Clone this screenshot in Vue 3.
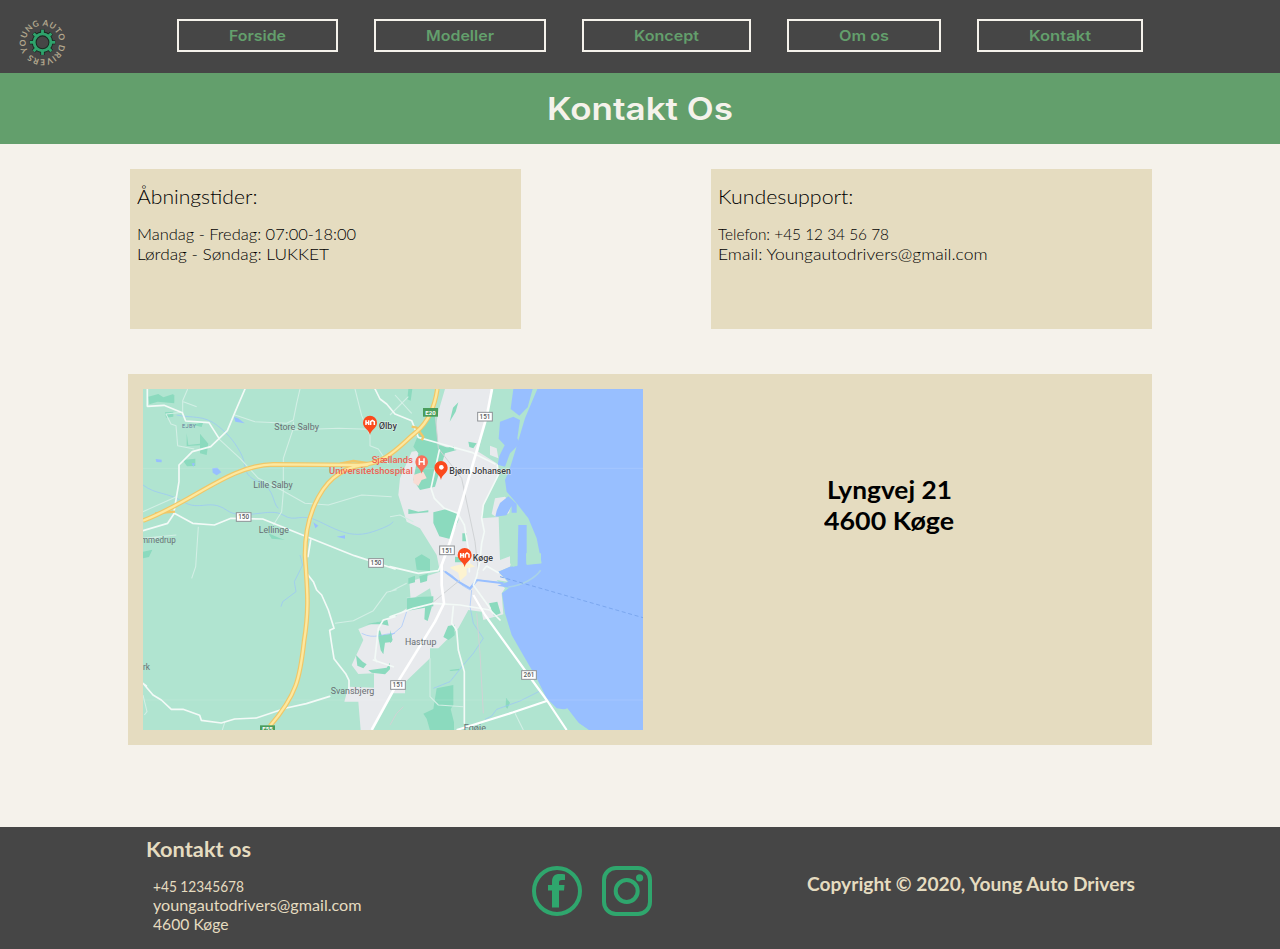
<script setup>
const links = [
  { label: 'Forside', measure: 57 },
  { label: 'Modeller', measure: 68 },
  { label: 'Koncept', measure: 65 },
  { label: 'Om os', measure: 50 },
  { label: 'Kontakt', measure: 62 },
]

const cards = [
  {
    title: 'Åbningstider:',
    measure: 120.5,
    lines: [
      { text: 'Mandag - Fredag: 07:00-18:00', measure: 219 },
      { text: 'Lørdag - Søndag: LUKKET', measure: 192 },
    ],
  },
  {
    title: 'Kundesupport:',
    measure: 135.5,
    lines: [
      { text: 'Telefon: +45 12 34 56 78', measure: 171 },
      { text: 'Email: Youngautodrivers@gmail.com', measure: 269.5 },
    ],
  },
]

const contact = [
  { text: '+45 12345678', measure: 91 },
  { text: 'youngautodrivers@gmail.com', measure: 208.5 },
  { text: '4600 Køge', measure: 75.5 },
]

const teeth = [0, 45, 90, 135, 180, 225, 270, 315]

const places = [
  { text: 'Store Salby', x: 403, y: 136, w: 134 },
  { text: 'Lille Salby', x: 340, y: 309, w: 118 },
  { text: 'Lellinge', x: 356, y: 445, w: 91 },
  { text: 'mmedrup', x: 3, y: 475, w: 104 },
  { text: 'Svansbjerg', x: 572, y: 927, w: 131 },
  { text: 'Hastrup', x: 795, y: 780, w: 94 },
  { text: 'Egøje', x: 971, y: 1039, w: 67 },
  { text: 'rk', x: 9, y: 855, w: 21 },
]

const shields = [
  { text: '150', x: 311, y: 396 },
  { text: '150', x: 708, y: 534 },
  { text: '151', x: 1035, y: 95 },
  { text: '151', x: 921, y: 496 },
  { text: '151', x: 774, y: 900 },
  { text: '261', x: 1167, y: 870 },
]

// Widens a line of text to its measure by stretching the letterforms.
const vFit = {
  mounted(el, { value }) {
    const natural = el.getBoundingClientRect().width
    el.style.width = `${value}px`
    el.style.transform = `scaleX(${value / natural})`
  },
}
</script>

<template>
  <div class="page">
    <header class="top">
      <svg class="logo" viewBox="0 0 45 45">
        <defs>
          <path id="ring" d="M8.2 31.4A16.8 16.8 0 1 1 36.8 13.6A16.8 16.8 0 1 1 8.2 31.4" />
        </defs>
        <text class="ring-text" textLength="101.5">
          <textPath href="#ring" textLength="101.5">YOUNG AUTO DRIVERS</textPath>
        </text>
        <g stroke="#16251d" stroke-width="4.2">
          <path v-for="a in teeth" :key="a" d="M22.5 13.2V9.6" :transform="`rotate(${a} 22.5 22.3)`" />
        </g>
        <circle cx="22.5" cy="22.3" r="8.3" fill="none" stroke="#1b2a22" stroke-width="4.8" />
        <g stroke="#2fa36c" stroke-width="2.8">
          <path v-for="a in teeth" :key="a" d="M22.5 13.8V9.7" :transform="`rotate(${a} 22.5 22.3)`" />
        </g>
        <circle cx="22.5" cy="22.3" r="8.4" fill="none" stroke="#2fa36c" stroke-width="2.9" />
      </svg>
      <nav class="nav">
        <a v-for="l in links" :key="l.label" class="nav-link"><span v-fit="l.measure" class="fit">{{ l.label }}</span></a>
      </nav>
    </header>

    <h1 class="banner"><span v-fit="186" class="fit">Kontakt Os</span></h1>

    <main class="content">
      <section class="cards">
        <article v-for="c in cards" :key="c.title" class="card">
          <h2 class="card-title"><span v-fit="c.measure" class="fit">{{ c.title }}</span></h2>
          <p v-for="l in c.lines" :key="l.text" class="card-line"><span v-fit="l.measure" class="fit">{{ l.text }}</span></p>
        </article>
      </section>

      <section class="location">
        <svg class="map" viewBox="9 12 1500 1023">
          <rect x="9" y="12" width="1500" height="1023" fill="#b0e4d0" />
          <!-- built-up area -->
          <path fill="#e8eaed" d="M915 12H1056L1040 80L1015 200L1072 236L1075 270L1030 360L1023 400L1076 396L1080 525L1120 510L1110 545L1075 560L1103 590L1070 585L1095 610L1085 625L1090 688L1030 705L1025 680L985 675L955 730L895 790L870 790V820L795 892V925L755 925L695 1035H662L655 950H613L625 905L702 908V865L655 867L635 840L670 765L655 732L700 715L765 695L800 670V638L875 635L870 610L812 645L808 590L900 560L890 510L840 430L800 410L775 330L780 280L815 200L915 185L880 170L895 80Z" />
          <path fill="#e8eaed" d="M1050 182l20 8 5 30-25-10zM1065 340l30-5 20 20-8 30-40 10-12-8z" />
          <!-- parks and woods -->
          <g fill="#8bdabe">
            <path d="M25 35l30-8 15 10 30-10 3 28-50-5-25 8zM68 40l35-10v20zM75 82l25-2v15l-22 3zM140 145l5 35 35-4v-30l25 30-5 34-20-5v-24l-40 2zM128 225l38-4v22l-25 1zM385 445l35 15 15 4-40-3zM9 500l28-6-10 22-18 4zM160 120l30-10-5 16z" />
            <path d="M805 12h12l-5 35-10-4zM955 52l-8 28-18 30 10-42zM855 100l30-10 10 90 55 15-35 10-30 100-45 10-20-30 15-80-15-20zM985 170l25 5-10 15-12-4zM880 382l40-10 35 15v20l-25 55-32-8-18-40zM805 372l30 8 30-4v6l-60 5zM967 445h14v24h-14zM920 188l22-4v12zM945 515l20 2v15h-20z" />
            <path d="M825 520l20-12 25 15v35l-40-4zM805 580l20-8v20l-20 5zM838 574l25-8-2 22-20 6zM800 640l35-4 45-2v30l-80 14zM855 668l22-8-14 48-10-5zM924 723l20-4v32l-18 14-16-9zM1047 655l25-5 10 35-20 8zM890 910l50-10v60l-8 12 10 40v24h-72l-10-35-10-15 30-14zM1098 938l12 15-8 18-5-6zM928 855l30-4v5l-26 2zM750 735l8 30-8 10z" />
            <path d="M680 718l62-14 4 18-20-4zM712 740l8-4 5 15 30-5v25l-20 2-5 35-8-12zM648 810l20 20 12 8-10 12-18-8zM685 856l55-8 10-15v20l-15 15-40-5z" />
          </g>
          <!-- bay and lakes -->
          <path fill="#98bfff" d="M1192 12L1155 100L1125 200L1108 255L1095 285L1100 320L1130 355L1165 400L1190 460L1203 525L1205 535L1160 540V420H1135L1132 543L1110 545L1075 560L1105 590L1072 602L1108 608L1086 625L1095 685L1115 750L1155 820L1190 880L1220 940L1250 970L1285 975L1310 1010L1345 1035H1509V12Z" />
          <path fill="#98bfff" d="M1120 12h58l-15 55-25 25-26-20zM1080 110l40-15 20 10-8 55 8 15-30 30-15 40-22-6 5-26 16-32-18-20zM1080 354l25-20 25 22v27h-15v-20l-16 28-33 4 4-18zM217 250l15-2 12 14-14 9-12-8zM282 96l12 4 20 15-28-5zM47 222l18 2v8l-16-1zM520 412l15 10-9 8zM590 455l25-4v10zM155 235h10l-5 10z" />
          <path fill="#b0e4d0" d="M1110 505h22v35l-12 5-10-10zM1158 505h45v30l-44 2z" />
          <path fill="#b0e4d0" d="M1210 958l50 20 22-8 35 45 30 20h-70z" />
          <g fill="none" stroke="#98bfff" stroke-width="3">
            <path d="M110 90c50 10 80 0 120 30s60 60 75 90 0 60 50 80 40 60 60 80M9 300c40 30 70 20 120 50s80-10 130 25 130-10 170 15 50-10 110 20 100 50 160 30 60-30 60-30M480 510l8 30-25 50 5 30-40 30-5 15M665 745c40 20 60 0 100 0M750 755l35-30 15-45M905 555l30 15 30 30 25 15 25-30 80 10M995 615l-5 50 10 50 30 45-30 45-30 35-40 50-50 20M1200 918l-60 30-70 25-15 20-20 10" opacity=".6" />
            <path d="M915 560l40 30 35 20 20-25 80 10" stroke-width="6" />
            <path d="M1105 606c40-5 80-25 97-50" stroke="#a9d2e8" stroke-width="5" />
          </g>
          <path d="M1080 575L1509 698" fill="none" stroke="#7ba7ef" stroke-width="3" stroke-dasharray="12 8" />
          <path d="M9 250H1509M9 945H1509" stroke="#fff" stroke-width="1.5" opacity=".25" />
          <path d="M1010 685l10 120 10 180M750 1020l20-35 20-20M885 80l10 110 70 90 40 190 10 90M875 655l85-70" fill="none" stroke="#d0d3d5" stroke-width="3" />
          <!-- local roads -->
          <g fill="none" stroke="#d3efe5" stroke-width="3.2" stroke-linejoin="round">
            <path d="M143 12l-15 35v35l-50 5 15 30 15 5 5 60 50 10M130 50l40 15M235 160l65 60 55 60 60 30 80 45 70 5 100-30 90 5M285 90l60 20 95 5 20-10 10-50 10-43M460 110v20l-30 90v100l-5 60-25 40M455 135l140-5 90 3M645 12l20 80 25 60 0 30 25 10 30 45M175 425l-8 120-12 35M9 380l100-45M585 715l55-8 60-30 40-55 30-8M9 930l12 50-8 10M255 1010l-8 25M750 90l30-30 25-25M750 395l30-5 40 20M870 820v115l25 25 75 5M1125 985l25 50M750 620l50-25M765 30l50 55M25 465l35-10M9 460l100-10" />
          </g>
          <g fill="none" stroke="#f3faf7" stroke-width="5" stroke-linecap="round" stroke-linejoin="round">
            <path d="M22 12v52l50-3 55 22 10 25 70 5 30 47M315 12l-28 65-25 60-50 48-55 15-40 40v50l-15 90M103 385l-20 30-74 22" />
            <path d="M103 385l55 30 65 5 50-20 95 2 125 50 150 60 122 40M512 465l-8 50" />
            <path d="M705 12l15 30 20 15 25 30 50 20 20 50 70 20 90 25 70 35" />
            <path d="M500 565l20 25 10 25 15 15 20 45 17 55-13 6 5 35 8 50 35 45 10 20v30M9 895l30 35 25 15 30 28h35l50 18 5 15 60 8 40-12 65-3 90-30 60-13 70-22M9 895l10 8" />
            <path d="M1072 240l3 30-45 90-5 40 8 40-8 35-5 50-10 50-10 25 50 70M898 195l-25 115 10 30 30 30 40 15 20 35 15 90 0 50" />
            <path d="M750 545l85 20 60-8 25-50M750 695l70-25 60-15 80 5 90 15 30 30M940 665l-5 50 15 20 5 60 18 65v155M710 830l-5-10 10-90 15-25 35-10M700 825l60 20M1030 555l10-12 35 20" />
          </g>
          <g fill="none" stroke="#fff" stroke-width="8" stroke-linejoin="round">
            <path d="M1056 12L1040 95L960 370L930 470L905 540V600L912 655L885 710L780 880L695 1035" />
            <path d="M1000 630L1035 690L1165 870L1220 945L1280 1035M1220 948L1120 982L950 1035" stroke-width="6.5" />
          </g>
          <!-- motorways -->
          <g fill="none" stroke-linejoin="round">
            <g stroke="#f0c768" stroke-width="14">
              <path d="M9 407C160 350 270 240 400 238L655 240C740 238 780 180 830 140C865 110 885 60 892 12" />
              <path d="M685 239C540 245 495 400 495 510C500 600 510 660 492 770C480 880 470 930 390 1023" />
              <path d="M600 236l40-8 55 8M815 125l15 3 20 28-5 10M105 380l-60 5" stroke-width="7" />
            </g>
            <g stroke="#fde89f" stroke-width="7">
              <path d="M9 407C160 350 270 240 400 238L655 240C740 238 780 180 830 140C865 110 885 60 892 12" />
              <path d="M685 239C540 245 495 400 495 510C500 600 510 660 492 770C480 880 470 930 390 1023" />
            </g>
          </g>
          <path fill="#fdf3d0" d="M935 545l20-5 35-5 15 10-25 5 0 20-20 18-5-25-25-15z" />
          <path fill="#f8dcd4" d="M820 270l30-10 10 20-15 5-10 18-15-10z" />

          <!-- road numbers -->
          <g v-for="(s, i) in shields" :key="i">
            <rect :x="s.x - 22" :y="s.y - 13" width="44" height="26" fill="#fff" stroke="#8e9296" stroke-width="3" />
            <text class="shield-text" :x="s.x" :y="s.y + 7">{{ s.text }}</text>
          </g>
          <rect x="849" y="69" width="45" height="26" fill="#4a9d5c" />
          <text class="euro-text" x="871.5" y="89">E20</text>
          <rect x="360" y="1021" width="45" height="26" fill="#4a9d5c" />
          <text class="euro-text" x="382.5" y="1039">E55</text>

          <!-- place names -->
          <text v-for="p in places" :key="p.text" class="place" :x="p.x" :y="p.y" :textLength="p.w" lengthAdjust="spacingAndGlyphs">{{ p.text }}</text>
          <text class="place small" x="126" y="130" textLength="42">EJBY</text>
          <g class="poi">
            <text x="716" y="131" textLength="55" lengthAdjust="spacingAndGlyphs">Ølby</text>
            <text x="928" y="267" textLength="185" lengthAdjust="spacingAndGlyphs">Bjørn Johansen</text>
            <text x="998" y="529" textLength="61" lengthAdjust="spacingAndGlyphs">Køge</text>
          </g>
          <g class="hospital">
            <text x="695" y="233" textLength="124" lengthAdjust="spacingAndGlyphs">Sjællands</text>
            <text x="567" y="266" textLength="252" lengthAdjust="spacingAndGlyphs">Universitetshospital</text>
          </g>

          <!-- pins -->
          <g fill="#fb4a1c">
            <path d="M690 150C688 134 669 130 669 113A21 21 0 0 1 711 113C711 130 692 134 690 150Z" />
            <path d="M903 285C901 268 883 265 883 248A20 20 0 0 1 923 248C923 265 905 268 903 285Z" />
            <path d="M974 547C972 530 953 527 953 510A21 21 0 0 1 995 510C995 527 976 530 974 547Z" />
          </g>
          <path d="M845 266C843 250 826 246 826 230A19 19 0 0 1 864 230C864 246 847 250 845 266Z" fill="#f9705a" />
          <circle cx="904" cy="247" r="7" fill="#fff" />
          <path d="M838 220v20M852 220v20M838 230h14M678 106v14M686 106v14M678 113h8M692 120v-10l5-4 6 4v10M962 504v14M970 504v14M962 511h8M976 518v-10l5-4 6 4v10" fill="none" stroke="#fff" stroke-width="4.5" />
        </svg>
        <address class="address">
          <span v-fit="125" class="fit">Lyngvej 21</span>
          <span v-fit="130" class="fit">4600 Køge</span>
        </address>
      </section>
    </main>

    <footer class="footer">
      <div class="contact">
        <h3 class="contact-title"><span v-fit="105" class="fit">Kontakt os</span></h3>
        <p v-for="l in contact" :key="l.text" class="contact-line"><span v-fit="l.measure" class="fit">{{ l.text }}</span></p>
      </div>
      <div class="social">
        <svg class="social-icon" viewBox="0 0 50 50">
          <circle cx="25" cy="25" r="23" fill="none" stroke="#2fa66d" stroke-width="4" />
          <path fill="#2fa66d" d="M20 41.5V24.5H16V19H20V16C20 10.5 22.5 8 27.5 8C30 8 31.5 8 33 8.5V14H30C27.5 14 27 15 27 17V19H32.5L32 24.5H27V41.5Z" />
        </svg>
        <svg class="social-icon" viewBox="0 0 50 50">
          <rect x="2" y="2" width="46" height="46" rx="12" fill="none" stroke="#2fa66d" stroke-width="4" />
          <circle cx="24.7" cy="25" r="11" fill="none" stroke="#2fa66d" stroke-width="4" />
          <circle cx="37.6" cy="11.8" r="3.6" fill="#2fa66d" />
        </svg>
      </div>
      <p class="copyright"><span v-fit="328" class="fit">Copyright © 2020, Young Auto Drivers</span></p>
    </footer>
  </div>
</template>

<style>
body {
  margin: 0;
  background: #f5f2eb;
}
</style>

<style scoped>
.page {
  display: flex;
  flex-direction: column;
  height: 949px;
  overflow: hidden;
  background: #f5f2eb;
  color: #000;
  font-family: Lato, "Open Sans", sans-serif;
}
h1, h2, h3, p {
  margin: 0;
  font-weight: inherit;
}
.fit {
  display: inline-block;
  text-align: left;
  white-space: nowrap;
  transform-origin: left center;
}
.top {
  display: flex;
  align-items: flex-start;
  height: 73px;
  box-sizing: border-box;
  padding: 19px 0 0 20px;
  background: #464646;
}
.logo {
  width: 45px;
  height: 45px;
  margin-top: 1px;
  overflow: visible;
}
.ring-text {
  font: 700 8.3px Lato, sans-serif;
  fill: #b3a88e;
}
.nav {
  display: flex;
  gap: 36px;
  margin-left: 112px;
}
.nav-link {
  height: 29px;
  padding: 0 50px;
  border: 2px solid #f5f2eb;
  color: #639f6c;
  font: 600 14.5px/29px Inter, sans-serif;
}
.banner {
  height: 71px;
  background: #639f6c;
  color: #f5f2eb;
  text-align: center;
  font: 600 31px/71px Inter, sans-serif;
}
.content {
  width: 1024px;
  margin: 25px auto 0;
}
.cards {
  display: grid;
  grid-template-columns: 391px 441px;
  justify-content: space-between;
  padding-left: 2px;
}
.card {
  height: 160px;
  box-sizing: border-box;
  padding: 14px 7px 0;
  background: #e5dcc0;
}
.card-title {
  margin-bottom: 15px;
  font-size: 20px;
  line-height: 26px;
  height: 26px;
  font-weight: 300;
}
.card-line {
  font-size: 16px;
  line-height: 20px;
  font-weight: 300;
  height: 20px;
}
.location {
  display: flex;
  height: 371px;
  margin-top: 45px;
  box-sizing: border-box;
  padding: 15px;
  background: #e5dcc0;
}
.map {
  width: 500px;
  height: 341px;
}
.place {
  font: 400 26px Roboto, sans-serif;
  fill: #686f73;
}
.place.small {
  font-size: 17px;
  fill: #64789a;
}
.poi {
  font: 500 25px Roboto, sans-serif;
  fill: #3c4043;
  stroke: #fff;
  stroke-width: 3px;
  stroke-opacity: 0.6;
  paint-order: stroke;
}
.hospital {
  font: 500 25px Roboto, sans-serif;
  fill: #ee6355;
}
.shield-text {
  font: 500 19px Roboto, sans-serif;
  fill: #55595c;
  text-anchor: middle;
}
.euro-text {
  font: 700 18px Roboto, sans-serif;
  fill: #fff;
  text-anchor: middle;
}
.address {
  display: flex;
  flex: 1;
  flex-direction: column;
  align-items: center;
  padding: 85px 2px 0 0;
  font-size: 25px;
  font-style: normal;
  font-weight: 700;
  line-height: 31px;
}
.footer {
  display: grid;
  grid-template-columns: 386px 120px 1fr;
  height: 122px;
  margin-top: auto;
  box-sizing: border-box;
  padding-left: 146px;
  background: #464646;
  color: #e5dcc0;
}
.contact {
  padding-top: 9px;
}
.contact-title {
  height: 26px;
  margin-bottom: 15px;
  font-size: 20px;
  font-weight: 700;
  line-height: 26px;
}
.contact-line {
  height: 19px;
  padding-left: 7px;
  font-size: 15px;
  line-height: 19px;
}
.social {
  display: flex;
  gap: 20px;
  padding-top: 39px;
}
.social-icon {
  width: 50px;
  height: 50px;
}
.copyright {
  padding: 46px 0 0 155px;
  font-size: 18px;
  font-weight: 700;
  line-height: 22px;
}
</style>
